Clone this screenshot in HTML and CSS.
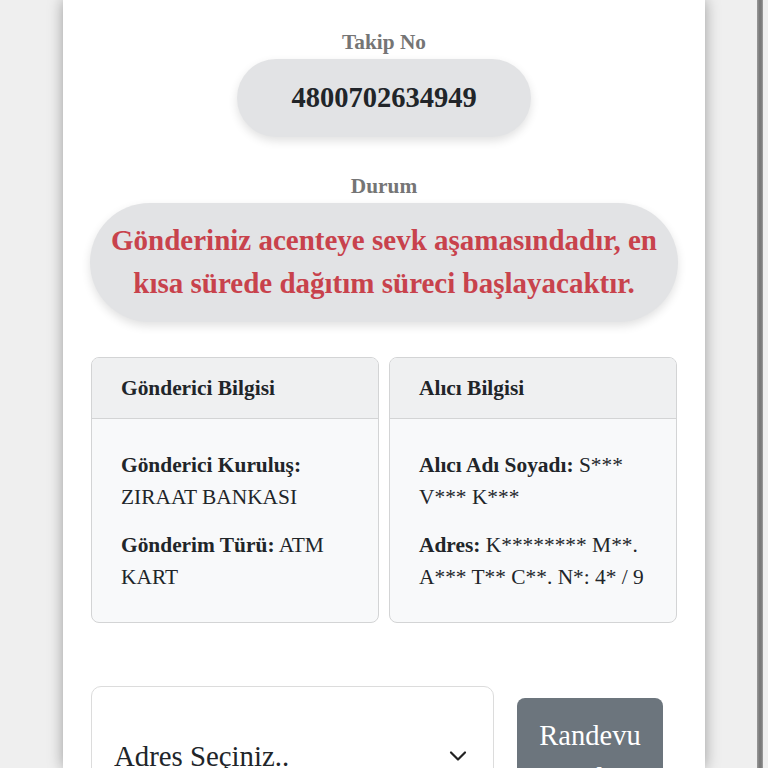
FILE: index.html
```html
<!DOCTYPE html>
<html lang="tr">
<head>
<meta charset="utf-8">
<title>Gönderi Takip</title>
<link rel="stylesheet" href="styles.css">
</head>
<body>
<div class="screen">
  <main class="page">
    <div class="label">Takip No</div>
    <div class="pill-row"><div class="pill">4800702634949</div></div>
    <div class="label label-durum">Durum</div>
    <div class="status">Gönderiniz acenteye sevk aşamasındadır, en kısa sürede dağıtım süreci başlayacaktır.</div>
    <div class="cards">
      <section class="card">
        <div class="card-head">Gönderici Bilgisi</div>
        <div class="card-body">
          <p><b>Gönderici Kuruluş:</b> ZIRAAT BANKASI</p>
          <p><b>Gönderim Türü:</b> ATM KART</p>
        </div>
      </section>
      <section class="card">
        <div class="card-head">Alıcı Bilgisi</div>
        <div class="card-body">
          <p><b>Alıcı Adı Soyadı:</b> S*** V*** K***</p>
          <p><b>Adres:</b> K******** M**. A*** T** C**. N*: 4* / 9</p>
        </div>
      </section>
    </div>
    <div class="actions">
      <div class="select">
        <span>Adres Seçiniz..</span>
        <svg class="chev" width="18" height="12" viewBox="0 0 18 12"><path d="M2 2.5 L9 9.5 L16 2.5" fill="none" stroke="#222" stroke-width="2.2" stroke-linecap="round" stroke-linejoin="round"/></svg>
      </div>
      <button class="btn">Randevu Al</button>
    </div>
  </main>
  <div class="scrollbar"></div>
</div>
</body>
</html>
```
FILE: styles.css
```css
html, body {
  margin: 0;
  padding: 0;
  height: 768px;
  overflow: hidden;
  background: #efefef;
  font-family: "Liberation Serif", "Times New Roman", serif;
}
.screen {
  display: flex;
  height: 768px;
  padding-left: 63px;
}
.page {
  width: 642px;
  flex: none;
  background: #fff;
  box-shadow: 0 0 14px rgba(0, 0, 0, 0.35);
  padding-top: 30px;
  text-align: center;
  box-sizing: border-box;
}
.scrollbar {
  width: 6px;
  margin-left: 52px;
  background: linear-gradient(to right, #9a9a9a, #7a7a7a 40%, #7a7a7a 70%, #a0a0a0);
  height: 768px;
}
.label {
  font-weight: bold;
  font-size: 21.3px;
  line-height: 24px;
  color: #757575;
}
.pill-row {
  margin-top: 5px;
}
.pill {
  display: inline-block;
  background: #e2e3e5;
  border-radius: 40px;
  padding: 24px 54px;
  font-size: 28.5px;
  line-height: 30px;
  font-weight: bold;
  color: #212529;
  box-shadow: 0 4px 10px rgba(0, 0, 0, 0.12);
}
.label-durum {
  margin-top: 37px;
}
.status {
  margin: 5px 27px 0;
  background: #e2e3e5;
  border-radius: 60px;
  padding: 16px 20px 17px;
  font-size: 29px;
  line-height: 43px;
  font-weight: bold;
  color: #c8424c;
  box-shadow: 0 4px 10px rgba(0, 0, 0, 0.12);
}
.cards {
  display: grid;
  grid-template-columns: 1fr 1fr;
  gap: 10px;
  margin: 35px 28px 0;
  text-align: left;
}
.card {
  border: 1px solid #d3d4d5;
  border-radius: 8px;
  background: #f8f9fa;
  overflow: hidden;
  color: #212529;
}
.card-head {
  background: #eff0f1;
  border-bottom: 1px solid #d3d4d5;
  padding: 15px 29px;
  font-size: 21.4px;
  line-height: 30px;
  font-weight: bold;
}
.card-body {
  padding: 30px 29px 29px;
  font-size: 21.4px;
  line-height: 32px;
}
.card-body p {
  margin: 0 0 16px;
}
.card-body p:last-child {
  margin-bottom: 0;
}
.actions {
  display: flex;
  align-items: center;
  gap: 23px;
  margin: 63px 28px 0;
}
.select {
  width: 403px;
  height: 140px;
  flex: none;
  box-sizing: border-box;
  border: 1.5px solid #dcdcdc;
  border-radius: 10px;
  display: flex;
  align-items: center;
  justify-content: space-between;
  padding: 0 26px 0 22px;
  font-size: 28.8px;
  color: #212529;
}
.chev {
  display: block;
}
.btn {
  width: 146px;
  border: none;
  border-radius: 8px;
  background: #6c757d;
  color: #fff;
  font-family: "Liberation Serif", "Times New Roman", serif;
  font-size: 28.5px;
  line-height: 42px;
  padding: 17px 10px;
  margin-top: 2px;
}
```
